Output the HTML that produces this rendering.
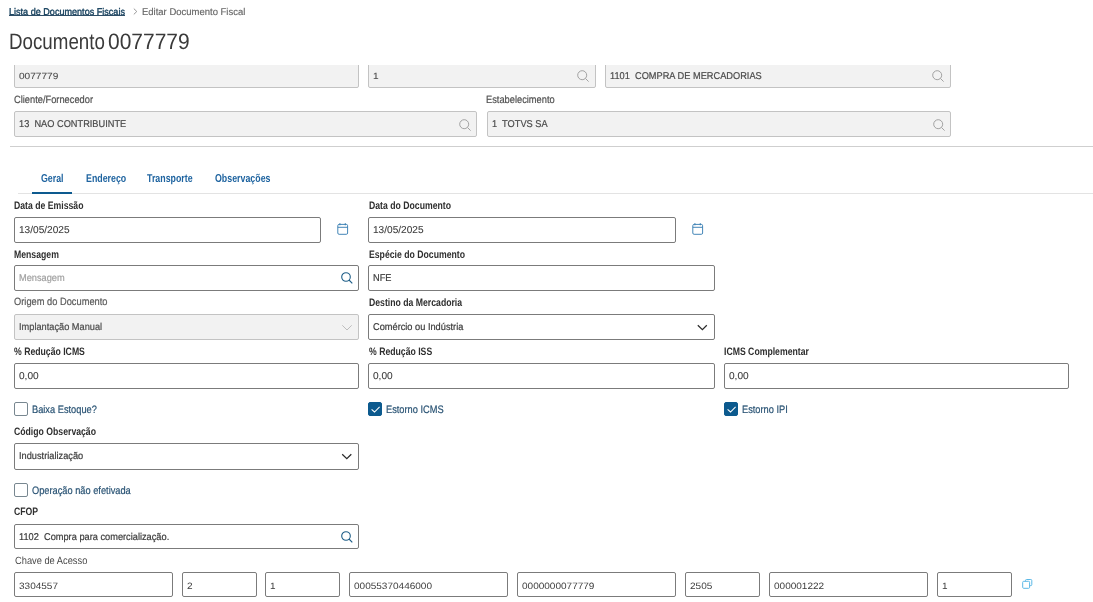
<!DOCTYPE html>
<html><head><meta charset="utf-8">
<style>
*{box-sizing:border-box;margin:0;padding:0}
html,body{width:1093px;height:602px;overflow:hidden;background:#fff;font-family:"Liberation Sans",sans-serif;position:relative;text-rendering:geometricPrecision}
.a{position:absolute;white-space:pre;line-height:1}
.bc{left:9px;top:7.6px;font-size:9.8px;transform:scaleX(.926);transform-origin:0 0;color:#0e3a58;-webkit-text-stroke:.35px #0e3a58;}
.bc2{left:141.8px;top:7.6px;font-size:9.8px;transform:scaleX(.968);transform-origin:0 0;color:#666;-webkit-text-stroke:.15px currentColor}
.chev{left:131px;top:6px;font-size:9px;color:#8a8a8a}
.title{left:8.5px;top:30.8px;font-size:22.3px;color:#3a3a3a;transform:scaleX(.841);transform-origin:0 0}
.lbl{font-size:10.8px;font-weight:bold;color:#2e2e2e;margin-top:-0.3px;transform:scaleX(.804);transform-origin:0 0}
.lbl2{font-size:10.5px;color:#505050;-webkit-text-stroke:.2px currentColor;transform:scaleX(.885);transform-origin:0 0;margin-top:-.8px}
.f{position:absolute;border:1px solid #7b7b7b;border-radius:2px;background:#fff;height:26px}
.f.d{border-color:#c3c3c3;background:#f2f2f2}
.f .t{position:absolute;left:3.6px;top:8px;font-size:9.9px;transform:scaleX(.935);transform-origin:0 0;color:#3a3a3a;-webkit-text-stroke:.2px currentColor;white-space:pre;line-height:1}
.f.d .t{color:#4a4a4a}
.f .t.n.k{font-size:9.2px;transform:scaleX(1.09);top:8.6px;-webkit-text-stroke:0;color:#3a3a3a}
.f .t.n{font-size:10px;top:8.3px;letter-spacing:0;transform:scaleX(1.01);transform-origin:0 0;-webkit-text-stroke:.08px currentColor}
.tab{font-size:11.4px;font-weight:bold;color:#1f64a0;margin-top:-.4px;transform:scaleX(.775);transform-origin:0 0}
.cb{position:absolute;width:14px;height:14px;border:1px solid #788790;border-radius:2px;background:#fff}
.cb.on{background:#0c5a8e;border-color:#0c5a8e}
.cbl{font-size:10.8px;color:#285273;-webkit-text-stroke:.2px currentColor;transform:scaleX(.857);transform-origin:0 0;margin-top:-.5px}
svg{position:absolute;overflow:visible}
</style></head><body><div id="root" style="position:absolute;left:0;top:0;width:1093px;height:602px;will-change:transform">

<div class="a bc">Lista de Documentos Fiscais</div><div style="position:absolute;left:9px;top:15px;width:116px;height:1px;background:#2d4d66"></div>
<svg style="left:133px;top:7.5px" width="5" height="7" viewBox="0 0 5 7"><polyline points="0.8,0.6 3.8,3.5 0.8,6.4" fill="none" stroke="#8c8c8c" stroke-width="0.9"/></svg>
<div class="a bc2">Editar Documento Fiscal</div>
<div class="a title">Documento</div><div class="a title" style="left:108.1px;transform:scaleX(.94)">0077779</div>

<!-- clipped top rows -->
<div style="position:absolute;left:0;top:65px;width:1093px;height:537px;overflow:hidden">
 <div class="f d" style="left:14px;top:-4px;width:345px;height:27px"><span class="t n" style="top:10px;font-size:9px;transform:scaleX(1.12)">0077779</span></div>
 <div class="f d" style="left:368px;top:-4px;width:228px;height:27px"><span class="t n" style="top:10px;font-size:9px;transform:scaleX(1.12)">1</span>
  <svg style="left:208px;top:8px" width="12" height="12" viewBox="0 0 12 12"><circle cx="5.2" cy="5.2" r="4.5" fill="none" stroke="#a2a2a2" stroke-width="1"/><line x1="8.4" y1="8.4" x2="11.6" y2="11.6" stroke="#a2a2a2" stroke-width="1"/></svg>
 </div>
 <div class="f d" style="left:605px;top:-4px;width:346px;height:27px"><span class="t" style="top:10.2px">1101  COMPRA DE MERCADORIAS</span>
  <svg style="left:326px;top:8px" width="12" height="12" viewBox="0 0 12 12"><circle cx="5.2" cy="5.2" r="4.5" fill="none" stroke="#a2a2a2" stroke-width="1"/><line x1="8.4" y1="8.4" x2="11.6" y2="11.6" stroke="#a2a2a2" stroke-width="1"/></svg>
 </div>
</div>

<div class="a lbl2" style="left:14px;top:96px">Cliente/Fornecedor</div>
<div class="a lbl2" style="left:485.8px;top:96px">Estabelecimento</div>
<div class="f d" style="left:14px;top:111px;width:463px;height:26px"><span class="t">13  NAO CONTRIBUINTE</span>
 <svg style="left:444px;top:6.5px" width="12" height="12" viewBox="0 0 12 12"><circle cx="5.2" cy="5.2" r="4.5" fill="none" stroke="#a2a2a2" stroke-width="1"/><line x1="8.4" y1="8.4" x2="11.6" y2="11.6" stroke="#a2a2a2" stroke-width="1"/></svg>
</div>
<div class="f d" style="left:487px;top:111px;width:464px;height:26px"><span class="t">1  TOTVS SA</span>
 <svg style="left:445px;top:6.5px" width="12" height="12" viewBox="0 0 12 12"><circle cx="5.2" cy="5.2" r="4.5" fill="none" stroke="#a2a2a2" stroke-width="1"/><line x1="8.4" y1="8.4" x2="11.6" y2="11.6" stroke="#a2a2a2" stroke-width="1"/></svg>
</div>

<div style="position:absolute;left:10px;top:146px;width:1083px;height:1px;background:#cfcfcf"></div>

<!-- tabs -->
<div class="a tab" style="left:41px;top:174px">Geral</div>
<div class="a tab" style="left:86px;top:174px">Endereço</div>
<div class="a tab" style="left:147px;top:174px">Transporte</div>
<div class="a tab" style="left:215px;top:174px">Observações</div>
<div style="position:absolute;left:18px;top:193px;width:1075px;height:1px;background:#e3e3e3"></div>
<div style="position:absolute;left:32px;top:192px;width:40px;height:2px;background:#0d5a8f"></div>

<!-- row: datas -->
<div class="a lbl" style="left:14px;top:201px">Data de Emissão</div>
<div class="f" style="left:14px;top:217px;width:307px"><span class="t n">13/05/2025</span></div>
<svg style="left:337px;top:223px" width="11" height="12" viewBox="0 0 11 12"><rect x="0.8" y="1.4" width="9.8" height="9.9" rx="1.3" fill="none" stroke="#3a7fb3" stroke-width="0.95"/><line x1="0.8" y1="4.3" x2="10.6" y2="4.3" stroke="#3a7fb3" stroke-width="0.95"/><line x1="2.9" y1="0.2" x2="2.9" y2="2.2" stroke="#3a7fb3" stroke-width="1.1"/><line x1="8.3" y1="0.2" x2="8.3" y2="2.2" stroke="#3a7fb3" stroke-width="1.1"/></svg>
<div class="a lbl" style="left:369px;top:201px">Data do Documento</div>
<div class="f" style="left:368px;top:217px;width:308px"><span class="t n">13/05/2025</span></div>
<svg style="left:692px;top:223px" width="11" height="12" viewBox="0 0 11 12"><rect x="0.8" y="1.4" width="9.8" height="9.9" rx="1.3" fill="none" stroke="#3a7fb3" stroke-width="0.95"/><line x1="0.8" y1="4.3" x2="10.6" y2="4.3" stroke="#3a7fb3" stroke-width="0.95"/><line x1="2.9" y1="0.2" x2="2.9" y2="2.2" stroke="#3a7fb3" stroke-width="1.1"/><line x1="8.3" y1="0.2" x2="8.3" y2="2.2" stroke="#3a7fb3" stroke-width="1.1"/></svg>

<!-- row: mensagem -->
<div class="a lbl" style="left:14px;top:250px">Mensagem</div>
<div class="f" style="left:14px;top:265px;width:345px"><span class="t" style="color:#a0a0a0">Mensagem</span>
 <svg style="left:326px;top:6px" width="12" height="12" viewBox="0 0 12 12"><circle cx="5" cy="5" r="4.3" fill="none" stroke="#1d5d87" stroke-width="1.1"/><line x1="8" y1="8" x2="11.3" y2="11.3" stroke="#1d5d87" stroke-width="1.1"/></svg>
</div>
<div class="a lbl" style="left:369px;top:250px">Espécie do Documento</div>
<div class="f" style="left:368px;top:265px;width:347px"><span class="t">NFE</span></div>

<!-- row: origem -->
<div class="a lbl2" style="left:14px;top:298px;color:#5a5a5a">Origem do Documento</div>
<div class="f d" style="left:14px;top:314px;width:345px"><span class="t">Implantação Manual</span>
 <svg style="left:327px;top:10px" width="11" height="6" viewBox="0 0 11 6"><polyline points="0.3,0.3 5,5 9.7,0.3" fill="none" stroke="#bdbdbd" stroke-width="1"/></svg>
</div>
<div class="a lbl" style="left:369px;top:298px">Destino da Mercadoria</div>
<div class="f" style="left:368px;top:314px;width:347px"><span class="t">Comércio ou Indústria</span>
 <svg style="left:328px;top:10px" width="11" height="6" viewBox="0 0 11 6"><polyline points="0.8,0.3 5.4,4.7 9.8,0.3" fill="none" stroke="#2a2a2a" stroke-width="1.25"/></svg>
</div>

<!-- row: reducao -->
<div class="a lbl" style="left:14px;top:347px">% Redução ICMS</div>
<div class="f" style="left:14px;top:363px;width:345px"><span class="t n">0,00</span></div>
<div class="a lbl" style="left:369px;top:347px">% Redução ISS</div>
<div class="f" style="left:368px;top:363px;width:347px"><span class="t n">0,00</span></div>
<div class="a lbl" style="left:724px;top:347px">ICMS Complementar</div>
<div class="f" style="left:724px;top:363px;width:345px"><span class="t n">0,00</span></div>

<!-- checkboxes -->
<div class="cb" style="left:14px;top:402px"></div>
<div class="a cbl" style="left:31.5px;top:405px">Baixa Estoque?</div>
<div class="cb on" style="left:368px;top:402px"><svg style="left:2px;top:3px" width="9" height="7" viewBox="0 0 9 7"><polyline points="0.6,3.4 3.5,6 8.6,0.9" fill="none" stroke="#fff" stroke-width="1.05"/></svg></div>
<div class="a cbl" style="left:386px;top:405px">Estorno ICMS</div>
<div class="cb on" style="left:724px;top:402px"><svg style="left:2px;top:3px" width="9" height="7" viewBox="0 0 9 7"><polyline points="0.6,3.4 3.5,6 8.6,0.9" fill="none" stroke="#fff" stroke-width="1.05"/></svg></div>
<div class="a cbl" style="left:742px;top:405px">Estorno IPI</div>

<!-- codigo observacao -->
<div class="a lbl" style="left:14px;top:427px">Código Observação</div>
<div class="f" style="left:14px;top:443px;width:345px;height:27px"><span class="t">Industrialização</span>
 <svg style="left:327px;top:10px" width="11" height="6" viewBox="0 0 11 6"><polyline points="0.2,0.2 4.8,4.6 9.3,0.2" fill="none" stroke="#2a2a2a" stroke-width="1.25"/></svg>
</div>

<div class="cb" style="left:14px;top:483px"></div>
<div class="a cbl" style="left:31.5px;top:486px">Operação não efetivada</div>

<!-- cfop -->
<div class="a lbl" style="left:14px;top:507px">CFOP</div>
<div class="f" style="left:14px;top:524px;width:345px;height:25px"><span class="t">1102  Compra para comercialização.</span>
 <svg style="left:326px;top:6px" width="12" height="12" viewBox="0 0 12 12"><circle cx="5" cy="5" r="4.3" fill="none" stroke="#1d5d87" stroke-width="1.1"/><line x1="8" y1="8" x2="11.3" y2="11.3" stroke="#1d5d87" stroke-width="1.1"/></svg>
</div>

<!-- chave de acesso -->
<div class="a lbl2" style="left:15px;top:557px;-webkit-text-stroke:0;color:#4a4a4a">Chave de Acesso</div>
<div class="f" style="left:14px;top:572px;width:159px;height:25px"><span class="t n k">3304557</span></div>
<div class="f" style="left:182px;top:572px;width:75px;height:25px"><span class="t n k">2</span></div>
<div class="f" style="left:265px;top:572px;width:75px;height:25px"><span class="t n k">1</span></div>
<div class="f" style="left:349px;top:572px;width:159px;height:25px"><span class="t n k">00055370446000</span></div>
<div class="f" style="left:517px;top:572px;width:159px;height:25px"><span class="t n k">0000000077779</span></div>
<div class="f" style="left:685px;top:572px;width:75px;height:25px"><span class="t n k">2505</span></div>
<div class="f" style="left:769px;top:572px;width:159px;height:25px"><span class="t n k">000001222</span></div>
<div class="f" style="left:937px;top:572px;width:75px;height:25px"><span class="t n k">1</span></div>
<svg style="left:1022px;top:578px" width="12" height="12" viewBox="0 0 12 12"><rect x="0.7" y="3.3" width="6.9" height="7" rx="1" fill="none" stroke="#5bb8e6" stroke-width="1"/><path d="M3.5 3.3V2.5Q3.5 1.5 4.5 1.5H8.8Q9.8 1.5 9.8 2.5V6.6Q9.8 7.6 8.8 7.6H7.6" fill="none" stroke="#5bb8e6" stroke-width="1"/></svg>

</div></body></html>
